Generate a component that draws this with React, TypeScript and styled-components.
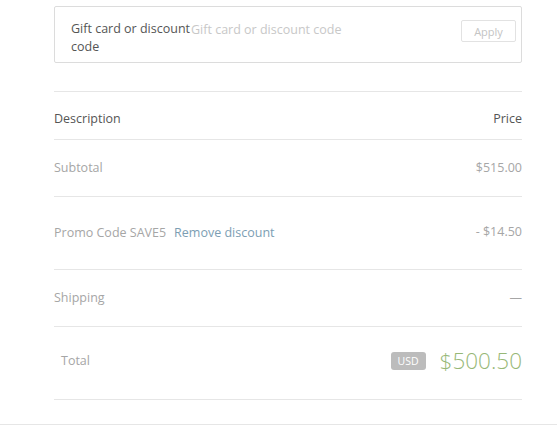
import React from 'react';
import styled, { createGlobalStyle } from 'styled-components';

const GlobalStyle = createGlobalStyle`
  body {
    margin: 0;
    background: #fff;
    font-family: 'Open Sans', 'Liberation Sans', sans-serif;
  }
`;

const Page = styled.div`
  width: 557px;
  padding-top: 6px;
  border-bottom: 1px solid #e6e6e6;
  padding-bottom: 24px;
`;

const Content = styled.div`
  width: 468px;
  margin-left: 54px;
`;

const DiscountBox = styled.div`
  display: flex;
  align-items: flex-start;
  border: 1px solid #dcdcdc;
  border-radius: 2px;
  padding: 13px 5px 7px 16px;
  height: 57px;
  box-sizing: border-box;
`;

const DiscountLabel = styled.label`
  width: 120px;
  font-size: 12.5px;
  line-height: 18px;
  color: #555;
  flex-shrink: 0;
`;

const DiscountInput = styled.input`
  flex: 1;
  border: none;
  outline: none;
  padding: 0;
  height: 18px;
  font-family: inherit;
  font-size: 12.5px;
  color: #555;
  &::placeholder {
    color: #c8c8c8;
  }
`;

const ApplyButton = styled.button`
  width: 55px;
  height: 22px;
  border: 1px solid #e2e2e2;
  border-radius: 2px;
  background: #fff;
  color: #c4c4c4;
  font-family: inherit;
  font-size: 11px;
  padding: 0;
`;

const Table = styled.div`
  margin-top: 28px;
  border-top: 1px solid #e6e6e6;
`;

// $shift moves the row's text down (positive) or up (negative) inside its fixed height
const Row = styled.div<{ $height: number; $indent?: number; $shift?: number }>`
  display: flex;
  align-items: center;
  justify-content: space-between;
  box-sizing: border-box;
  height: ${({ $height }) => $height + 1}px;
  border-bottom: 1px solid #e6e6e6;
  padding-left: ${({ $indent }) => $indent || 0}px;
  padding-top: ${({ $shift }) => Math.max($shift || 0, 0)}px;
  padding-bottom: ${({ $shift }) => Math.max(-($shift || 0), 0)}px;
`;

const Cell = styled.span<{ $dark?: boolean }>`
  font-size: 12.5px;
  color: ${({ $dark }) => ($dark ? '#555' : '#a6a6a6')};
`;

const RemoveLink = styled.a`
  margin-left: 8px;
  font-size: 12.5px;
  color: #7c9eb3;
  text-decoration: none;
`;

const TotalRight = styled.div`
  display: flex;
  align-items: center;
  gap: 14px;
`;

const Badge = styled.span`
  background: #bcbcbc;
  color: #fff;
  font-size: 10.5px;
  border-radius: 3px;
  padding: 2px 7px;
  line-height: 14px;
`;

const TotalAmount = styled.span`
  font-size: 22.5px;
  font-weight: 300;
  color: #97b877;
`;

export default function App() {
  return (
    <>
      <GlobalStyle />
      <Page>
        <Content>
          <DiscountBox>
            <DiscountLabel htmlFor="code">Gift card or discount code</DiscountLabel>
            <DiscountInput id="code" placeholder="Gift card or discount code" />
            <ApplyButton>Apply</ApplyButton>
          </DiscountBox>
          <Table>
            <Row $height={47} $shift={6}>
              <Cell $dark>Description</Cell>
              <Cell $dark>Price</Cell>
            </Row>
            <Row $height={56} $shift={-2}>
              <Cell>Subtotal</Cell>
              <Cell>$515.00</Cell>
            </Row>
            <Row $height={72} $shift={-4}>
              <span>
                <Cell>Promo Code SAVE5</Cell>
                <RemoveLink href="#">Remove discount</RemoveLink>
              </span>
              <Cell>- $14.50</Cell>
            </Row>
            <Row $height={56} $shift={-2}>
              <Cell>Shipping</Cell>
              <Cell>—</Cell>
            </Row>
            <Row $height={72} $indent={7} $shift={-5}>
              <Cell>Total</Cell>
              <TotalRight>
                <Badge>USD</Badge>
                <TotalAmount>$500.50</TotalAmount>
              </TotalRight>
            </Row>
          </Table>
        </Content>
      </Page>
    </>
  );
}
